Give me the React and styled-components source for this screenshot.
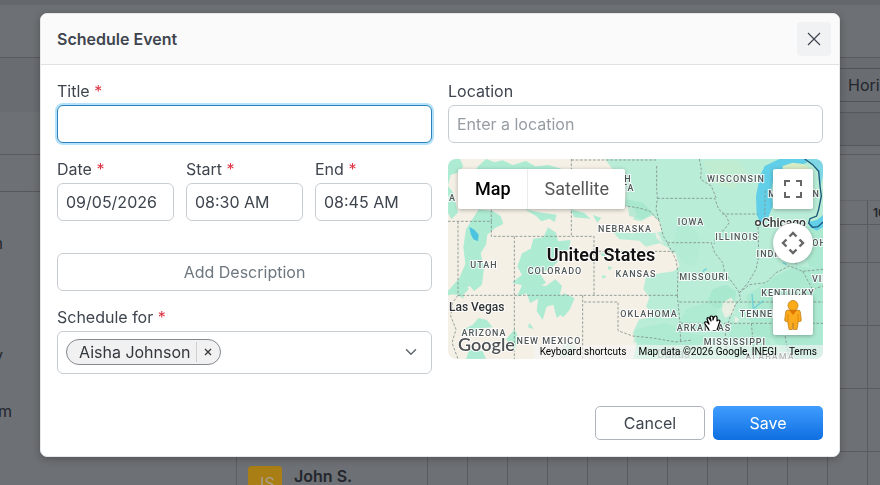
import React, { useState } from 'react';
import styled, { createGlobalStyle, css } from 'styled-components';
import { ChevronDown } from 'lucide-react';

const TIME_CELLS = Array.from({ length: 11 }, (_, i) => i);

const STATE_LABELS = [
  { name: 'H', x: 180, y: 23 },
  { name: 'TA', x: 180, y: 32 },
  { name: 'DA', x: 1, y: 42 },
  { name: 'WISCONSIN', x: 288, y: 23 },
  { name: 'MICHIGAN', x: 346, y: 38 },
  { name: 'IOWA', x: 243, y: 66 },
  { name: 'NEBRASKA', x: 177, y: 73 },
  { name: 'ILLINOIS', x: 289, y: 81 },
  { name: 'OHIO', x: 377, y: 87 },
  { name: 'INDIANA', x: 330, y: 98 },
  { name: 'UTAH', x: 36, y: 109 },
  { name: 'COLORADO', x: 107, y: 115 },
  { name: 'KANSAS', x: 188, y: 118 },
  { name: 'MISSOURI', x: 256, y: 121 },
  { name: 'VIRG', x: 376, y: 123 },
  { name: 'KENTUCKY', x: 340, y: 137 },
  { name: 'OKLAHOMA', x: 201, y: 158 },
  { name: 'TENNESSEE', x: 321, y: 158 },
  { name: 'ARKANSAS', x: 256, y: 172 },
  { name: 'ARIZONA', x: 36, y: 177 },
  { name: 'NEW MEXICO', x: 101, y: 185 },
  { name: 'MISSISSIPPI', x: 287, y: 186 },
  { name: 'ALABAMA', x: 322, y: 201 },
];

const MapTerrain = () => (
  <MapLayer viewBox="6 9 1125 600" preserveAspectRatio="xMidYMid slice" aria-hidden="true">
    <rect x="0" y="0" width="1140" height="620" fill="#f5f0e6" />
    {/* 동부 녹지 */}
    <path
      fill="#b9edd7"
      d="M470 0L500 40L520 70L540 110L536 150L560 152L574 176L560 190L584 196L620 178L640 196L648 226L620 232L596 226L560 232L500 226L520 250L580 254L600 272L640 262L664 274L690 300L700 330L684 346L640 352L600 362L592 400L610 424L600 452L620 470L604 486L580 490L560 530L572 560L560 620H1140V0Z"
    />
    <g fill="#9fe5cb">
      <path d="M700 180q50 30 60 70t-20 80q-40-10-60-60z" opacity=".2" />
      <path d="M800 400l40-14 30 20-6 40-50 10-30-16z" opacity=".7" />
      <path d="M720 460l60-20 40 16-20 40-60 14-40-10z" opacity=".4" />
      <path d="M570 520l90-20 60 30 60 10-30 40-90-10-100-10z" opacity=".4" />
      <path d="M900 420l90-60 60-30 80 10v260l-90 10-60-60-60-20z" opacity=".5" />
      <path d="M1080 210l60 10v130l-50-20-30-60z" opacity=".5" />
      <path d="M860 500l100 10 20 90-90 10-50-40z" opacity=".4" />
      <path d="M540 130l50 10 30 30-30 20-40-10z" opacity=".7" />
    </g>
    <g fill="#cdeec6" opacity=".7">
      <path d="M770 14l110 0 30 46-50 40-60-20z" opacity=".5" />
    </g>
    <g fill="#aeebd3">
      <path d="M6 9h36l10 22-14 18-24 8-8 30zM6 90l16 20 14 60-20 20-10-20z" />
      <path d="M120 9l26 10 24-6 30 14 40-12 28 16 40-4 40 12-30 20H120l-36-6 10-20z" />
      <path d="M98 160l40 4 26 16 8 24-24 12-24 20-4 30-16 26 10 44-6 50-24 20-12-16-24 14 6 24-30-16-40 14 30-30 26-30 18-42-6-50 8-54z" />
      <path d="M236 160l50 10 46 6-6 22-16-10-24 8-16-16z" />
      <path d="M374 160l40 10 20 18-50-4zM440 176l26 10-12 14z" />
      <path d="M306 214l24 16 6 26 38-4-6 30-42 10 10 24-22 24-34 10 20 30-40 24 14 26-22 12-10-30-30 10 16-34-30-8 30-24-14-24 14-40 26-14 8-30 30-4z" />
      <path d="M220 374l40 10 40 6 28-20 20 20-6 24 26 12-10 40-26 20-10-40-20 6-12 40-18-26 4-36-30-16z" />
      <path d="M352 410l34 16-14 34-20 24-14-10 14-30z" />
      <path d="M98 486l24 6 18 22-26 2-28 12-30-10 24-12z" />
      <path d="M180 550l26-30 14 30-16 30zM250 500l14 20-18-6z" />
      <path d="M484 330l14 4-8 10zM470 356l12 6-14 6zM460 290l22 4-10 10z" />
      <path d="M14 400l20-12 36 10-20 20-44-4zM70 580l40 6 10 22-60 2z" />
      <path d="M350 560l40 10-10 30-40 6z" opacity=".5" />
    </g>
    <g fill="#f5f0e6">
      <path d="M830 440l26-16 12 18-6 30-24 14-10-22zM866 480l14 10-14 14z" opacity=".8" />
      <path d="M624 196l10 30 20 40-24-20zM660 286l30 6 4 30-14-16z" opacity=".7" />
    </g>
    {/* 호수 */}
    <path fill="#62cfe8" d="M942 60L956 30L1000 9H1076L1084 20L1040 34L1010 40L984 60L976 100L980 150L966 186L944 200L932 176L930 120Z" />
    <path fill="#d6ecc4" d="M1010 30L1040 20L1070 24L1090 36V60H1010Z" />
    <path fill="#7fd6e4" d="M1076 9H1131V60L1122 90L1118 50L1100 26Z" />
    <path fill="#62cfe8" d="M1088 198L1112 192L1131 178V214L1112 224L1092 214Z" />
    <path fill="#4cc3e0" d="M70 212l16 10 12 14-2 20-14-6-8-16z" />
    {/* 주 경계 */}
    <g fill="none" stroke="#84938d" strokeWidth="3" strokeDasharray="8 5" opacity=".85">
      <path d="M6 196H136V160M136 196V241H444V418M36 196V418M205 241V609M36 418H694M376 9V241M376 12H630" />
      <path d="M376 150H540L580 156L612 166L640 196L652 240L664 260L690 312L696 350L694 418M632 30V100L634 127L630 160L640 196" />
      <path d="M634 127H806L818 160L838 176L850 200L834 222L812 236L804 264M664 260H796L806 290L830 320L836 350L858 378L878 406L884 430L868 446" />
      <path d="M828 174H936M936 200L938 300L930 340L906 380L880 410M760 9L766 40L764 70L796 90L812 130" />
      <path d="M444 286H686M414 438H516V524L560 540L620 546L690 558L740 552M410 418V609M694 418L702 500L704 560M700 438H1131" />
      <path d="M704 502H838M868 446L850 490L838 530L842 600M838 502H1131M916 502L926 609M1010 502L1030 609" />
      <path d="M880 410L910 386L960 380L990 350L1030 330L1070 346L1131 340M1050 200L1050 330M1070 346L1100 400L1131 390" />
      <path d="M36 418L20 440L14 480L30 520L18 560L36 609M956 190L958 100" />
    </g>
    <path
      fill="none"
      stroke="#1c5677"
      strokeWidth="4"
      d="M1076 9L1100 26L1118 46L1122 90L1126 120L1118 160L1112 180L1092 188L1088 202L1100 214L1116 212L1131 198"
    />
    <path fill="none" stroke="#54c6dc" strokeWidth="4" opacity=".7" d="M918 414l4 44 30-24M770 346l12-8M1010 320l12 6" />
    <circle cx="936" cy="201" r="7" fill="#fff" stroke="#333" strokeWidth="4" />
  </MapLayer>
);

const MapText = () => (
  <MapLayer viewBox="0 0 375 200" preserveAspectRatio="xMidYMid slice">
    {STATE_LABELS.map((label) => (
      <StateText key={label.name} x={label.x} y={label.y}>
        {label.name}
      </StateText>
    ))}
    <CityText x="314" y="68">
      Chicago
    </CityText>
    <CityText x="1" y="152">
      Las Vegas
    </CityText>
    <CityText x="209" y="199" $faded>
      Dallas
    </CityText>
    <CountryText x="153" y="102">United States</CountryText>
    <LogoText x="10" y="192">
      Google
    </LogoText>
    {/* 손 모양 커서 */}
    <path
      fill="#fff"
      stroke="#000"
      strokeWidth="1.2"
      strokeLinejoin="round"
      d="M261 171L260 169L257 165Q256 162 259 163L261 165L259 160Q259 158 261 159L263 162L262 158Q263 156 265 158L265 161L266 158Q268 156 269 158L269 162Q271 160 272 162L270 168L269 171"
    />
  </MapLayer>
);

const Backdrop = () => (
  <Page aria-hidden="true">
    <PageBar />
    <PageHeader />
    <FilterBar>
      <ViewButton type="button" tabIndex={-1}>
        Horizontal
      </ViewButton>
    </FilterBar>
    <DateBar>
      <DateRange />
    </DateBar>
    <Schedule>
      <Sidebar>
        <SidebarHead />
        <SidebarItem $inset={3}>Plan</SidebarItem>
        <SidebarItem $inset={3} />
        <SidebarItem $inset={3}>Weekly</SidebarItem>
        <SidebarItem $inset={12}>Team</SidebarItem>
      </Sidebar>
      <Timeline>
        <TimelineGap />
        <HourRow>
          <HourCell>10 AM</HourCell>
        </HourRow>
        <TimeRow $short />
        <TimeRow />
        <TimeRow />
        <TimeRow />
        <TimeRow>
          <Person>
            <Avatar>JS</Avatar>
            <PersonName>John S.</PersonName>
          </Person>
          {TIME_CELLS.map((cell) => (
            <TimeCell key={cell} />
          ))}
        </TimeRow>
      </Timeline>
    </Schedule>
  </Page>
);

const Field = ({ id, label, required, children }) => (
  <FieldWrap>
    <Label htmlFor={id}>
      {label} {required && <Required>*</Required>}
    </Label>
    {children}
  </FieldWrap>
);

const App = () => {
  const [title, setTitle] = useState('');
  const [location, setLocation] = useState('');
  const [date, setDate] = useState('09/05/2026');
  const [start, setStart] = useState('08:30 AM');
  const [end, setEnd] = useState('08:45 AM');
  const [people, setPeople] = useState(['Aisha Johnson']);
  const [mapType, setMapType] = useState('map');

  const removePerson = (name) => {
    setPeople(people.filter((person) => person !== name));
  };

  return (
    <>
      <GlobalStyle />
      <Backdrop />
      <Overlay>
        <Modal role="dialog" aria-labelledby="modal-title">
          <ModalHeader>
            <ModalTitle id="modal-title">Schedule Event</ModalTitle>
            <CloseButton type="button" aria-label="Close">
              <svg width="14" height="14" viewBox="0 0 14 14" fill="none" stroke="currentColor" strokeWidth="1.2">
                <path d="M1 1l12 12M13 1L1 13" />
              </svg>
            </CloseButton>
          </ModalHeader>
          <ModalBody>
            <Column>
              <Field id="title" label="Title" required>
                <Input id="title" $active value={title} onChange={(e) => setTitle(e.target.value)} />
              </Field>
              <TimeFields>
                <Field id="date" label="Date" required>
                  <Input id="date" value={date} onChange={(e) => setDate(e.target.value)} />
                </Field>
                <Field id="start" label="Start" required>
                  <Input id="start" value={start} onChange={(e) => setStart(e.target.value)} />
                </Field>
                <Field id="end" label="End" required>
                  <Input id="end" value={end} onChange={(e) => setEnd(e.target.value)} />
                </Field>
              </TimeFields>
              <DescriptionButton type="button">Add Description</DescriptionButton>
              <Field id="people" label="Schedule for" required>
                <MultiSelect>
                  {people.map((person) => (
                    <Tag key={person}>
                      <TagName>{person}</TagName>
                      <TagRemove type="button" aria-label={`Remove ${person}`} onClick={() => removePerson(person)}>
                        <svg width="8" height="8" viewBox="0 0 8 8" fill="none" stroke="currentColor" strokeWidth="1.3">
                          <path d="M1 1l6 6M7 1L1 7" />
                        </svg>
                      </TagRemove>
                    </Tag>
                  ))}
                  <PeopleSelect id="people" value="" onChange={(e) => setPeople([...people, e.target.value])}>
                    <option value="" />
                  </PeopleSelect>
                  <Chevron size={18} strokeWidth={2} />
                </MultiSelect>
              </Field>
            </Column>

            <Column>
              <Field id="location" label="Location">
                <Input
                  id="location"
                  placeholder="Enter a location"
                  value={location}
                  onChange={(e) => setLocation(e.target.value)}
                />
              </Field>
              <MapBox>
                <MapTerrain />
                <MapText />
                <MapTypes>
                  <MapTypeButton type="button" $active={mapType === 'map'} onClick={() => setMapType('map')}>
                    Map
                  </MapTypeButton>
                  <MapTypeButton
                    type="button"
                    $active={mapType === 'satellite'}
                    onClick={() => setMapType('satellite')}
                  >
                    Satellite
                  </MapTypeButton>
                </MapTypes>
                <MapTools>
                  <MapTool type="button" aria-label="Toggle fullscreen view">
                    <svg width="18" height="18" viewBox="0 0 18 18" fill="#666">
                      <path d="M0 0v6h2V2h4V0H0zm16 0h-4v2h4v4h2V0h-2zm0 16h-4v2h6v-6h-2v4zM2 12H0v6h6v-2H2v-4z" />
                    </svg>
                  </MapTool>
                  <MapTool type="button" aria-label="Map camera controls" $round>
                    <svg width="24" height="24" viewBox="0 0 24 24" fill="none" stroke="#666" strokeWidth="2.4">
                      <path d="M8.500 5.500L12 2l3.500 3.500M8.500 18.500L12 22l3.500-3.500M5.500 8.500L2 12l3.500 3.500M18.500 8.500L22 12l-3.500 3.500" />
                    </svg>
                  </MapTool>
                  <MapTool type="button" aria-label="Show street view" $last>
                    <svg width="18" height="30" viewBox="0 0 18 30">
                      <path
                        fill="#f9ab1d"
                        stroke="#b9770f"
                        strokeWidth=".7"
                        d="M4 10h10q2 0 2.300 2l1 8q0 1.500-1.500 1.500h-1.500L13 29.500H9.600L9 23l-.6 6.500H5L3.700 21.500H2.200Q.7 21.500.7 20l1-8q.3-2 2.300-2z"
                      />
                      <path fill="#e37400" d="M5 10h8L9 15zM3.600 14h.7v7.500h-.7zM13.700 14h.7v7.500h-.7z" />
                      <circle cx="9" cy="5.500" r="5" fill="#fbab18" stroke="#b9770f" strokeWidth=".7" />
                    </svg>
                  </MapTool>
                </MapTools>
                <Attribution>
                  <AttributionButton type="button">Keyboard shortcuts</AttributionButton>
                  <span>Map data ©2026 Google, INEGI</span>
                  <a href="#terms">Terms</a>
                </Attribution>
              </MapBox>
            </Column>
          </ModalBody>
          <ModalFooter>
            <FooterButton type="button">Cancel</FooterButton>
            <FooterButton type="button" $primary>
              Save
            </FooterButton>
          </ModalFooter>
        </Modal>
      </Overlay>
    </>
  );
};

const GlobalStyle = createGlobalStyle`
  * {
    box-sizing: border-box;
  }
  body {
    margin: 0;
    overflow: hidden;
    background: #6d7074;
    color: #3e454e;
    font-family: Inter, 'Liberation Sans', sans-serif;
    font-size: 16px;
    line-height: 20px;
  }
  :where(button, input, select) {
    font: inherit;
    color: inherit;
  }
  :where(button) {
    padding: 0;
    border: 0;
    cursor: pointer;
  }
`;

/* 모달 뒤 화면 */
const Page = styled.div`
  height: 100vh;
  overflow: hidden;
  display: flex;
  flex-direction: column;
  color: #23272d;
`;

const PageBar = styled.div`
  flex: 0 0 5px;
  background: #64676c;
`;

const PageHeader = styled.div`
  flex: 0 0 53px;
  border-bottom: 1px solid #585b60;
`;

const FilterBar = styled.div`
  flex: 0 0 54px;
  padding: 10px 0;
  display: flex;
  justify-content: flex-end;
  background: #696c71;
`;

const ViewButton = styled.button`
  width: 120px;
  height: 34px;
  margin-right: -40px;
  padding-left: 47px;
  display: flex;
  align-items: center;
  border: 1px solid #505358;
  background: transparent;
`;

const DateBar = styled.div`
  flex: 0 0 43px;
  display: flex;
  justify-content: flex-end;
  border-bottom: 1px solid #585b60;
`;

const DateRange = styled.div`
  width: 50%;
  height: 34px;
  border: 1px solid #55595e;
  border-right: 0;
  background: #666a6f;
`;

const Schedule = styled.div`
  flex: 1;
  min-height: 0;
  display: flex;
`;

const Sidebar = styled.div`
  flex: 0 0 236px;
`;

const SidebarHead = styled.div`
  height: 37px;
  margin-bottom: 23px;
  border-bottom: 1px solid #55585d;
`;

const SidebarItem = styled.div`
  width: ${({ $inset }) => $inset}px;
  height: 56px;
  display: flex;
  align-items: center;
  justify-content: flex-end;
`;

const Timeline = styled.div`
  flex: 1;
  border-left: 1px solid #5b5e63;
`;

const TimelineGap = styled.div`
  height: 46px;
  border-bottom: 1px solid #63666b;
`;

const HourRow = styled.div`
  height: 24px;
  padding-left: 630px;
  display: flex;
  border-bottom: 1px solid #585b60;
`;

const HourCell = styled.div`
  flex: 1;
  padding-left: 5px;
  border-left: 1px solid #55585d;
  font-size: 12px;
  font-weight: 600;
  line-height: 24px;
  white-space: nowrap;
`;

const TimeRow = styled.div`
  height: ${({ $short }) => ($short ? 38 : 63)}px;
  display: flex;
  border-bottom: 1px solid #585b60;
  background: linear-gradient(#585b60, #585b60) 630px 0 / 1px 100% no-repeat;
`;

const Person = styled.div`
  flex: 0 0 190px;
  padding: 14px 11px;
  display: flex;
  gap: 12px;
`;

const Avatar = styled.div`
  flex: 0 0 34px;
  height: 34px;
  display: flex;
  align-items: center;
  justify-content: center;
  border-radius: 4px;
  background: #a97e14;
  color: #a8a08b;
`;

const PersonName = styled.div`
  font-weight: 600;
`;

const TimeCell = styled.div`
  flex: 0 0 40px;
  border-left: 1px solid #585b60;
`;

/* 모달 */
const Overlay = styled.div`
  position: fixed;
  inset: 0;
  padding: 13px 16px;
  overflow: hidden;
`;

const Modal = styled.div`
  max-width: 800px;
  margin: 0 auto;
  overflow: hidden;
  border: 1px solid #e6e8ea;
  border-radius: 7px;
  background: #fff;
  box-shadow: 0 2px 8px rgba(0, 0, 0, 0.25);
`;

const ModalHeader = styled.div`
  padding: 8px 8px 8px 16px;
  display: flex;
  align-items: center;
  justify-content: space-between;
  border-bottom: 1px solid #dfe1e4;
  background: #fafafb;
`;

const ModalTitle = styled.h2`
  margin: 0;
  font-size: 16px;
  font-weight: 600;
`;

const CloseButton = styled.button`
  width: 34px;
  height: 34px;
  display: flex;
  align-items: center;
  justify-content: center;
  border-radius: 4px;
  background: #f1f2f4;
`;

const ModalBody = styled.div`
  padding: 16px 16px 0;
  display: grid;
  grid-template-columns: 1fr 1fr;
  gap: 16px;
`;

const Column = styled.div`
  min-width: 0;
  display: flex;
  flex-direction: column;
  gap: 16px;
`;

const FieldWrap = styled.div`
  min-width: 0;
  display: flex;
  flex-direction: column;
  gap: 4px;
`;

const Label = styled.label`
  line-height: 20px;
`;

const Required = styled.span`
  color: #dc3545;
`;

const TimeFields = styled.div`
  display: grid;
  grid-template-columns: repeat(3, 1fr);
  gap: 12px;
`;

const controlBorder = css`
  border: 1px solid #c8cdd2;
  border-radius: 6px;
`;

const Input = styled.input`
  ${controlBorder}
  width: 100%;
  height: 38px;
  padding: 0 8px;
  background: #fff;
  outline: none;

  &::placeholder {
    color: #969ca3;
    opacity: 1;
  }

  ${({ $active }) =>
    $active &&
    css`
      border-color: #2b83bd;
      box-shadow: 0 0 0 2px #b5e2fa;
    `}
`;

const DescriptionButton = styled.button`
  ${controlBorder}
  height: 38px;
  margin-top: 16px;
  background: #fff;
  color: #6d7780;
`;

const MultiSelect = styled.div`
  ${controlBorder}
  height: 43px;
  padding: 6px 11px 8px 8px;
  display: flex;
  align-items: center;
`;

const Tag = styled.span`
  height: 26px;
  display: flex;
  align-items: center;
  border: 1px solid #83888d;
  border-radius: 13px;
  background: #f1f1f2;
  color: #33373c;
`;

const TagName = styled.span`
  padding: 0 5px 0 12px;
`;

const TagRemove = styled.button`
  width: 24px;
  height: 20px;
  display: flex;
  align-items: center;
  justify-content: center;
  border-left: 1px solid #cdd0d3;
  background: transparent;
`;

const PeopleSelect = styled.select`
  flex: 1;
  min-width: 0;
  height: 26px;
  border: 0;
  outline: none;
  appearance: none;
  background: transparent;
`;

const Chevron = styled(ChevronDown)`
  flex: none;
  color: #5f676f;
  pointer-events: none;
`;

const MapBox = styled.div`
  position: relative;
  height: 200px;
  overflow: hidden;
  border-radius: 8px;
  font-family: Roboto, 'Liberation Sans', sans-serif;
`;

const MapLayer = styled.svg`
  position: absolute;
  inset: 0;
  width: 100%;
  height: 100%;
`;

const haloText = css`
  stroke: rgba(255, 255, 255, 0.85);
  stroke-width: 2px;
  paint-order: stroke;
`;

const StateText = styled.text`
  ${haloText}
  fill: #50585a;
  font-size: 9px;
  font-weight: 500;
  letter-spacing: 1px;
  text-anchor: middle;
`;

const CityText = styled.text`
  ${haloText}
  fill: #2f3335;
  font-size: 12px;
  font-weight: 500;
  opacity: ${({ $faded }) => ($faded ? 0.4 : 1)};
`;

const CountryText = styled.text`
  ${haloText}
  fill: #111;
  font-size: 18px;
  font-weight: 600;
  text-anchor: middle;
`;

const LogoText = styled.text`
  ${haloText}
  fill: #4c5053;
  font-family: Lato, sans-serif;
  font-size: 18px;
  font-weight: 600;
`;

const MapTypes = styled.div`
  position: absolute;
  top: 10px;
  left: 10px;
  display: flex;
  border-radius: 2px;
  background: #fff;
  box-shadow: 0 1px 4px rgba(0, 0, 0, 0.3);
`;

const MapTypeButton = styled.button`
  height: 40px;
  padding: 0 16px 0 17px;
  background: transparent;
  color: ${({ $active }) => ($active ? '#000' : '#565656')};
  font-size: 18px;
  font-weight: ${({ $active }) => ($active ? 500 : 400)};

  & + & {
    border-left: 1px solid #ececec;
  }
`;

const MapTools = styled.div`
  position: absolute;
  top: 10px;
  right: 10px;
  display: flex;
  flex-direction: column;
  gap: 14px;
`;

const MapTool = styled.button`
  width: 40px;
  height: 40px;
  margin-top: ${({ $last }) => ($last ? 18 : 0)}px;
  display: flex;
  align-items: center;
  justify-content: center;
  border-radius: ${({ $round }) => ($round ? '50%' : '2px')};
  background: #fff;
  box-shadow: 0 1px 4px rgba(0, 0, 0, 0.3);
`;

const Attribution = styled.div`
  position: absolute;
  right: 0;
  bottom: 0;
  height: 14px;
  padding: 0 6px;
  display: flex;
  gap: 12px;
  background: rgba(245, 245, 245, 0.6);
  color: #000;
  font-size: 10px;
  line-height: 14px;
  white-space: nowrap;

  a {
    color: inherit;
    text-decoration: none;
  }
`;

const AttributionButton = styled.button`
  background: transparent;
`;

const ModalFooter = styled.div`
  padding: 32px 16px 16px;
  display: flex;
  justify-content: flex-end;
  gap: 8px;
`;

const FooterButton = styled.button`
  width: 110px;
  height: 34px;
  border: 1px solid ${({ $primary }) => ($primary ? 'transparent' : '#b0b5bb')};
  border-radius: 5px;
  background: ${({ $primary }) => ($primary ? 'linear-gradient(#3f9dff, #0f6fe0) border-box' : '#fff')};
  color: ${({ $primary }) => ($primary ? '#fff' : 'inherit')};
`;

export default App;
